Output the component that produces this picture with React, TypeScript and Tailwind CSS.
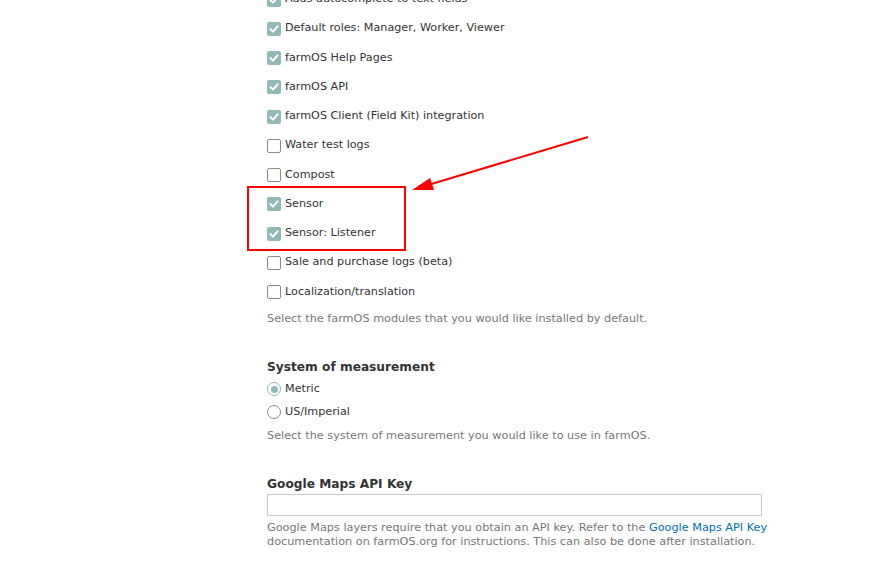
import React from "react";

const font = { fontFamily: '"DejaVu Sans", sans-serif' };

function Check({ checked }: { checked: boolean }) {
  return checked ? (
    <span className="w-[14px] h-[14px] rounded-[2px] bg-[#8fbab6] flex items-center justify-center shrink-0">
      <svg width="10" height="10" viewBox="0 0 10 10">
        <path d="M1.5 5.2 L4 7.6 L8.6 2.4" stroke="white" strokeWidth="2" fill="none" strokeLinecap="round" strokeLinejoin="round" />
      </svg>
    </span>
  ) : (
    <span className="w-[14px] h-[14px] rounded-[2px] border-[1.5px] border-[#8a8a8a] bg-white shrink-0" />
  );
}

const items: [string, boolean][] = [
  ["Adds autocomplete to text fields", true],
  ["Default roles: Manager, Worker, Viewer", true],
  ["farmOS Help Pages", true],
  ["farmOS API", true],
  ["farmOS Client (Field Kit) integration", true],
  ["Water test logs", false],
  ["Compost", false],
  ["Sensor", true],
  ["Sensor: Listener", true],
  ["Sale and purchase logs (beta)", false],
  ["Localization/translation", false],
];

export default function App() {
  return (
    <div className="w-[894px] h-[564px] bg-white overflow-hidden relative text-[#333]" style={font}>
      <div className="ml-[267px] w-[520px] -mt-[15px]">
        <div className="flex flex-col">
          {items.map(([label, c]) => (
            <div key={label} className="h-[29.25px] flex items-center gap-[4px] text-[11.2px]">
              <Check checked={c} />
              <span>{label}</span>
            </div>
          ))}
        </div>
        <div className="text-[11.25px] text-[#777] mt-[4px] leading-[16px]">
          Select the farmOS modules that you would like installed by default.
        </div>
        <div className="font-bold text-[12.2px] mt-[31px] leading-[18px] text-[#333]">System of measurement</div>
        <div className="flex flex-col mt-[2px]">
          <div className="h-[23px] flex items-center gap-[4px] text-[11.2px]">
            <span className="w-[14px] h-[14px] rounded-full border-[1.5px] border-[#8fbab6] flex items-center justify-center">
              <span className="w-[7px] h-[7px] rounded-full bg-[#8fbab6]" />
            </span>
            <span>Metric</span>
          </div>
          <div className="h-[23px] flex items-center gap-[4px] text-[11.2px]">
            <span className="w-[14px] h-[14px] rounded-full border-[1.5px] border-[#8a8a8a]" />
            <span>US/Imperial</span>
          </div>
        </div>
        <div className="text-[11.25px] text-[#777] mt-[4px] leading-[16px]">
          Select the system of measurement you would like to use in farmOS.
        </div>
        <div className="font-bold text-[12.2px] mt-[31px] leading-[18px] text-[#333]">Google Maps API Key</div>
        <div className="w-[495px] h-[22px] border border-[#c8c8c8] mt-[1px]" />
        <div className="text-[11.25px] text-[#777] mt-[5px] leading-[14px]">
          Google Maps layers require that you obtain an API key. Refer to the{" "}
          <span className="text-[#0071b3]">Google Maps API Key</span>
          <br />
          documentation on farmOS.org for instructions. This can also be done after installation.
        </div>
      </div>

      <div className="absolute left-[247px] top-[186px] w-[159px] h-[65px] border-2 border-[#ff0000]" />
      <svg className="absolute left-0 top-0" width="894" height="564">
        <line x1="588" y1="137" x2="428" y2="185" stroke="#ff0000" strokeWidth="2" />
        <polygon points="412,190 430,178 434,190" fill="#ff0000" />
      </svg>
    </div>
  );
}
